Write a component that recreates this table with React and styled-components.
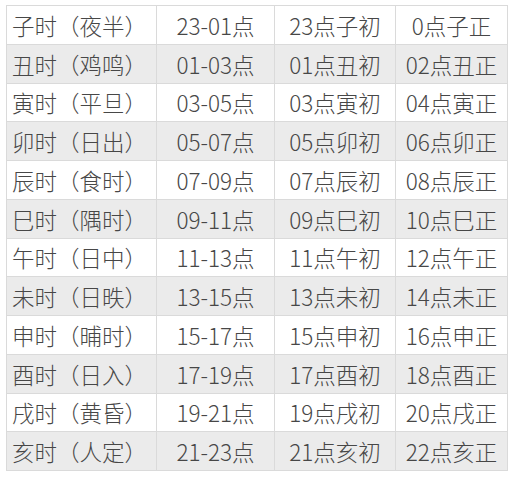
import React from "react";
import styled, { createGlobalStyle } from "styled-components";

const rows = [
  ["子时（夜半）", "23-01点", "23点子初", "0点子正"],
  ["丑时（鸡鸣）", "01-03点", "01点丑初", "02点丑正"],
  ["寅时（平旦）", "03-05点", "03点寅初", "04点寅正"],
  ["卯时（日出）", "05-07点", "05点卯初", "06点卯正"],
  ["辰时（食时）", "07-09点", "07点辰初", "08点辰正"],
  ["巳时（隅时）", "09-11点", "09点巳初", "10点巳正"],
  ["午时（日中）", "11-13点", "11点午初", "12点午正"],
  ["未时（日昳）", "13-15点", "13点未初", "14点未正"],
  ["申时（晡时）", "15-17点", "15点申初", "16点申正"],
  ["酉时（日入）", "17-19点", "17点酉初", "18点酉正"],
  ["戌时（黄昏）", "19-21点", "19点戌初", "20点戌正"],
  ["亥时（人定）", "21-23点", "21点亥初", "22点亥正"],
];

const GlobalStyle = createGlobalStyle`
  body {
    margin: 0;
    background: #fff;
    font-family: "Noto Sans CJK SC", "Noto Sans", sans-serif;
  }
`;

const Page = styled.div`
  width: 514px;
  height: 500px;
  padding: 5px 0 0 6px;
  box-sizing: border-box;
`;

const Table = styled.div`
  width: 501px;
  display: grid;
  grid-template-columns: 150px 118px 121px 112px;
  border-top: 1px solid #dadada;
  border-left: 1px solid #dadada;
`;

const Row = styled.div`
  display: contents;
`;

const Cell = styled.div`
  height: 37.75px;
  display: flex;
  align-items: center;
  justify-content: ${(p) => (p.first ? "flex-start" : "center")};
  padding-left: ${(p) => (p.first ? "5px" : "0")};
  border-right: 1px solid #dadada;
  border-bottom: 1px solid #dadada;
  background: ${(p) => (p.shaded ? "#ebebeb" : "#fff")};
  color: #474747;
  font-size: 22.5px;
  font-weight: 300;
  white-space: nowrap;
  overflow: hidden;
`;

export default function App() {
  return (
    <>
      <GlobalStyle />
      <Page>
        <Table>
          {rows.map((r, i) => (
            <Row key={i}>
              {r.map((t, j) => (
                <Cell key={j} shaded={i % 2 === 1} first={j === 0}>
                  {t}
                </Cell>
              ))}
            </Row>
          ))}
        </Table>
      </Page>
    </>
  );
}
